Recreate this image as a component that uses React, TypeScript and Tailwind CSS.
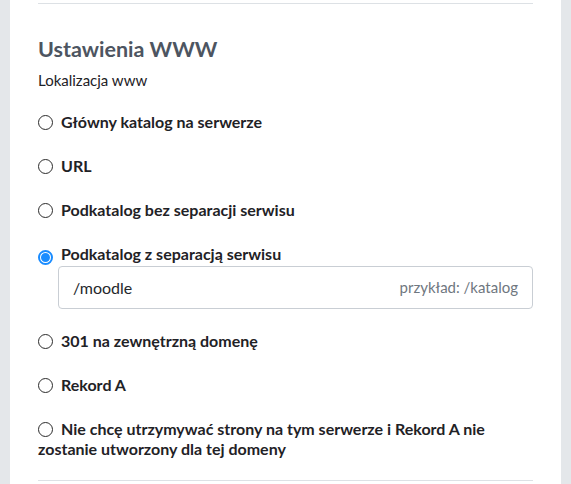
import React, { useState } from "react";

type Option = { id: string; label: string };

const options: Option[] = [
  { id: "root", label: "Główny katalog na serwerze" },
  { id: "url", label: "URL" },
  { id: "subdir", label: "Podkatalog bez separacji serwisu" },
  { id: "subdir-sep", label: "Podkatalog z separacją serwisu" },
  { id: "redirect", label: "301 na zewnętrzną domenę" },
  { id: "a-record", label: "Rekord A" },
  {
    id: "none",
    label:
      "Nie chcę utrzymywać strony na tym serwerze i Rekord A nie zostanie utworzony dla tej domeny",
  },
];

function Radio({ checked }: { checked: boolean }) {
  return checked ? (
    <span className="inline-flex h-[15px] w-[15px] shrink-0 items-center justify-center rounded-full border-2 border-[#1a8cff] bg-white align-[-2px]">
      <span className="h-[9px] w-[9px] rounded-full bg-[#1a8cff]" />
    </span>
  ) : (
    <span className="inline-block h-[15px] w-[15px] shrink-0 rounded-full border border-[#2b2b2b] bg-white align-[-2px]" />
  );
}

export default function App() {
  const [selected, setSelected] = useState("subdir-sep");
  const [path, setPath] = useState("/moodle");

  return (
    <div className="min-h-[484px] bg-[#e4e7ea] px-[10px] font-['Lato','Noto_Sans',sans-serif]">
      <div className="min-h-[484px] bg-white px-[28px] pt-[3px]">
        <div className="h-px bg-[#dde1e5]" />

        <h2 className="mt-[31px] text-[21.5px] font-bold leading-[28px] text-[#4d5561]">
          Ustawienia WWW
        </h2>
        <p className="mt-[7px] text-[15px] leading-[20px] text-[#1d2126]">
          Lokalizacja www
        </p>

        <div className="mt-[22px] flex flex-col gap-[24px]">
          {options.map((opt) => (
            <div key={opt.id}>
              <label
                className="block cursor-pointer text-[16px] font-bold leading-[20px] text-[#1f2226]"
                onClick={() => setSelected(opt.id)}
              >
                <Radio checked={selected === opt.id} />
                <span className="ml-[8px]">{opt.label}</span>
              </label>
              {opt.id === "subdir-sep" && selected === opt.id && (
                <div className="-mb-[2px] ml-[20px] mt-[1px] flex h-[43px] items-center rounded-[4px] border border-[#c9ced4] px-[14px]">
                  <input
                    value={path}
                    onChange={(e) => setPath(e.target.value)}
                    className="min-w-0 flex-1 bg-transparent text-[16px] text-[#24272b] outline-none"
                  />
                  <span className="text-[15px] text-[#6f7780]">przykład: /katalog</span>
                </div>
              )}
            </div>
          ))}
        </div>

        <div className="mt-[21px] h-px bg-[#dde1e5]" />
      </div>
    </div>
  );
}
